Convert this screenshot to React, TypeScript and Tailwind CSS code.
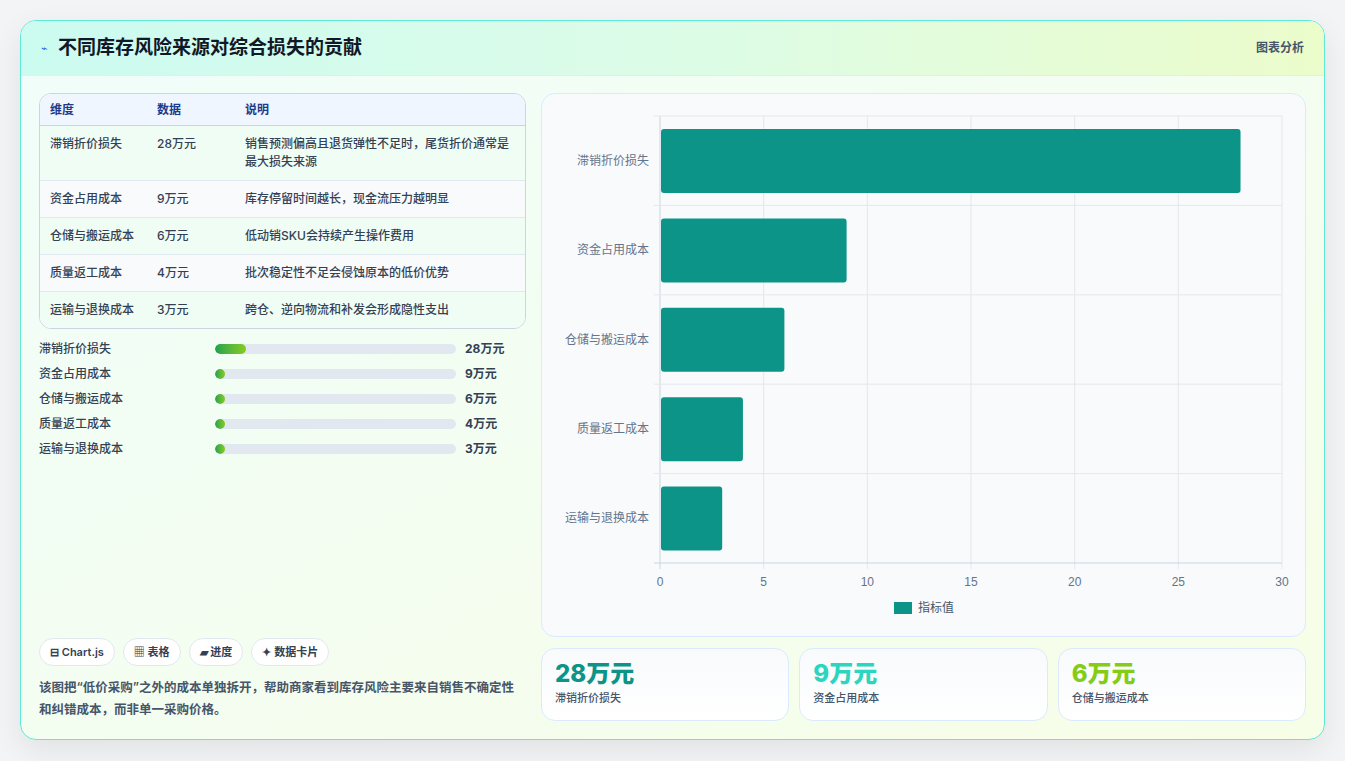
const rows = [
  { name: "滞销折价损失", v: 28, desc: "销售预测偏高且退货弹性不足时，尾货折价通常是最大损失来源" },
  { name: "资金占用成本", v: 9, desc: "库存停留时间越长，现金流压力越明显" },
  { name: "仓储与搬运成本", v: 6, desc: "低动销SKU会持续产生操作费用" },
  { name: "质量返工成本", v: 4, desc: "批次稳定性不足会侵蚀原本的低价优势" },
  { name: "运输与退换成本", v: 3, desc: "跨仓、逆向物流和补发会形成隐性支出" },
];

function Chart() {
  // plot area inside svg: x 118..740, y 22..469 (svg at 542,93)
  const x0 = 118, x1 = 740, y0 = 22, y1 = 469;
  const band = (y1 - y0) / 5;
  const sx = (v: number) => x0 + ((x1 - x0) * v) / 30;
  return (
    <svg width="764" height="543" className="block">
      {[0, 5, 10, 15, 20, 25, 30].map((t) => (
        <g key={t}>
          <line x1={sx(t)} x2={sx(t)} y1={y0} y2={y1 + 6} stroke={t === 0 ? "#cbd5e1" : "#e5e7eb"} />
          <text x={sx(t)} y={y1 + 23} textAnchor="middle" fontSize="12" fill="#64748b" fontFamily="Liberation Sans, sans-serif">{t}</text>
        </g>
      ))}
      {[0, 1, 2, 3, 4, 5].map((i) => (
        <line key={i} x1={x0 - 6} x2={x1} y1={y0 + band * i} y2={y0 + band * i} stroke={i === 5 ? "#cbd5e1" : "#e5e7eb"} />
      ))}
      {rows.map((r, i) => (
        <g key={r.name}>
          <rect x={x0 + 1} y={y0 + band * i + 13} width={sx(r.v) - x0 - 1} height={64} rx={3} fill="#0d9488" />
          <text x={x0 - 11} y={y0 + band * i + band / 2 + 4} textAnchor="end" fontSize="12" fill="#64748b" fontFamily="Noto Sans CJK SC, sans-serif">{r.name}</text>
        </g>
      ))}
      <rect x="352" y="508" width="18" height="12" fill="#0d9488" />
      <text x="376" y="518" fontSize="12" fill="#475569" fontFamily="Noto Sans CJK SC, sans-serif">指标值</text>
    </svg>
  );
}

export default function App() {
  return (
    <div className="w-[1345px] h-[761px] bg-[#f3f4f6] pt-[20px] pl-[20px]" style={{ fontFamily: "Inter, 'Noto Sans CJK SC', sans-serif" }}>
      <div className="w-[1305px] h-[720px] rounded-[16px] border border-[#5eead4] overflow-hidden shadow-[0_10px_30px_rgba(0,0,0,0.08)] bg-gradient-to-br from-[#f0fdfa] to-[#f7fee7] flex flex-col">
        <div className="h-[55px] flex items-center justify-between px-[20px] bg-gradient-to-r from-[#ccfbf1] via-[#dcfce7] to-[#ecfccb] border-b border-[#d1fae5]">
          <div className="flex items-center gap-[10px]">
            <span className="text-[#2563eb] text-[11px]">⌁</span>
            <span className="text-[19px] font-bold text-[#111827]">不同库存风险来源对综合损失的贡献</span>
          </div>
          <span className="text-[12px] font-semibold text-[#475569]">图表分析</span>
        </div>
        <div className="flex gap-[15px] px-[18px] pt-[17px] flex-1">
          <div className="w-[489px] flex flex-col">
            <div className="rounded-[12px] border border-[#cbd5e1] overflow-hidden text-[12px]">
              <div className="flex h-[32px] items-center bg-[#eff6ff] text-[#1e3a8a] font-semibold border-b border-[#cbd5e1]">
                <div className="w-[117px] pl-[10px]">维度</div>
                <div className="w-[88px]">数据</div>
                <div className="flex-1">说明</div>
              </div>
              {rows.map((r, i) => (
                <div key={r.name} className={`flex py-[9px] text-[#334155] font-medium leading-[18px] ${i % 2 ? "bg-[#f8fafc]" : "bg-[#f0fdf4]"} ${i < 4 ? "border-b border-[#e2e8f0]" : ""}`}>
                  <div className="w-[117px] pl-[10px]">{r.name}</div>
                  <div className="w-[88px]">{r.v}万元</div>
                  <div className="flex-1 pr-[8px]">{r.desc}</div>
                </div>
              ))}
            </div>
            <div className="mt-[11px] flex flex-col gap-[7px] text-[12px]">
              {rows.map((r) => (
                <div key={r.name} className="flex items-center h-[18px]">
                  <div className="w-[176px] text-[#334155] font-medium">{r.name}</div>
                  <div className="w-[241px] h-[10px] rounded-full bg-[#e2e8f0] overflow-hidden">
                    <div className="h-full rounded-full bg-gradient-to-r from-[#16a34a] to-[#84cc16]" style={{ width: `${Math.max(10, (r.v / 220) * 241)}px` }} />
                  </div>
                  <div className="ml-[9px] font-bold text-[#334155]">{r.v}万元</div>
                </div>
              ))}
            </div>
            <div className="mt-auto pb-[18px]">
              <div className="flex gap-[8px] text-[11px] font-semibold text-[#334155]">
                {["⊟ Chart.js", "▦ 表格", "▰ 进度", "✦ 数据卡片"].map((c) => (
                  <span key={c} className="h-[28px] px-[10px] flex items-center rounded-full bg-white border border-[#e2e8f0]">{c}</span>
                ))}
              </div>
              <p className="mt-[11px] text-[12.5px] leading-[22px] font-semibold text-[#475569]">该图把“低价采购”之外的成本单独拆开，帮助商家看到库存风险主要来自销售不确定性和纠错成本，而非单一采购价格。</p>
            </div>
          </div>
          <div className="w-[765px] flex flex-col gap-[11px]">
            <div className="h-[544px] rounded-[14px] border border-[#dbeafe] bg-[#f8fafc]">
              <Chart />
            </div>
            <div className="flex gap-[10px]">
              {[
                { v: "28万元", l: "滞销折价损失", c: "text-[#0d9488]" },
                { v: "9万元", l: "资金占用成本", c: "text-[#2dd4bf]" },
                { v: "6万元", l: "仓储与搬运成本", c: "text-[#84cc16]" },
              ].map((s) => (
                <div key={s.l} className="flex-1 h-[73px] rounded-[14px] border border-[#dbeafe] bg-gradient-to-b from-[#f8fafc] to-white px-[13px] pt-[10px]">
                  <div className={`text-[24px] leading-[30px] font-extrabold ${s.c}`}>{s.v}</div>
                  <div className="text-[11px] font-medium text-[#475569] mt-[1px]">{s.l}</div>
                </div>
              ))}
            </div>
          </div>
        </div>
      </div>
    </div>
  );
}
